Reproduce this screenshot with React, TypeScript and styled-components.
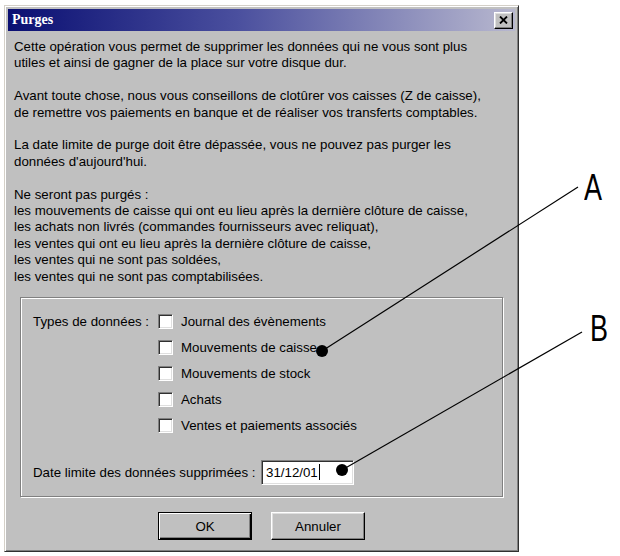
import React from 'react';
import styled, { createGlobalStyle } from 'styled-components';

const GlobalStyle = createGlobalStyle`
  html, body {
    margin: 0;
    padding: 0;
    background: #ffffff;
  }
  body {
    font-family: "Liberation Sans", Arial, sans-serif;
    color: #000;
  }
`;

// 화면 전체 (흰 바탕)
const Page = styled.div`
  position: relative;
  width: 620px;
  height: 556px;
  box-sizing: border-box;
  padding: 5px 0 0 4px;
  overflow: hidden;
  background: #ffffff;
`;

// 대화상자 창
const Window = styled.div`
  width: 515px;
  box-sizing: border-box;
  background: #c0c0c0;
  border: 1px solid;
  border-color: #d4d0c8 #303030 #303030 #d4d0c8;
  box-shadow: inset 1px 1px 0 #ffffff, inset -1px -1px 0 #808080;
  padding: 3px;
`;

const TitleBar = styled.div`
  height: 22px;
  display: flex;
  align-items: center;
  justify-content: space-between;
  padding: 0 2px 0 4px;
  background: linear-gradient(90deg, #0a0f72 0%, #4a4f9e 45%, #b8b8cf 100%);
`;

const Title = styled.span`
  font-family: "Liberation Serif", "Times New Roman", serif;
  font-weight: bold;
  font-size: 14px;
  color: #ffffff;
`;

const CloseButton = styled.div`
  width: 19px;
  height: 17px;
  box-sizing: border-box;
  display: flex;
  align-items: center;
  justify-content: center;
  background: #c0c0c0;
  border: 1px solid;
  border-color: #ffffff #000000 #000000 #ffffff;
  box-shadow: inset -1px -1px 0 #808080, inset 1px 1px 0 #dfdfdf;
`;

const Body = styled.div`
  padding: 8px 0 8px 0;
`;

const Description = styled.div`
  padding-left: 6px;
  font-size: 13.3px;
  line-height: 16.4px;
  white-space: nowrap;
`;

const Para = styled.p`
  margin: 0 0 16.4px 0;
  &:last-child {
    margin-bottom: 0;
  }
`;

// 그룹 박스 (홈 파인 테두리)
const GroupBox = styled.div`
  margin: 12px 12px 0 12px;
  padding: 11px 12px 11.5px 12px;
  border: 1px solid #808080;
  box-shadow: inset 1px 1px 0 #ffffff, 1px 1px 0 #ffffff;
  font-size: 13.3px;
`;

const TypesGrid = styled.div`
  display: grid;
  grid-template-columns: 125px 1fr;
`;

const FieldLabel = styled.div<{ $width?: number }>`
  height: 25.8px;
  display: flex;
  align-items: center;
  white-space: nowrap;
  ${(p) => (p.$width ? `width: ${p.$width}px; flex: none;` : '')}
`;

const CheckList = styled.div`
  display: flex;
  flex-direction: column;
`;

const CheckRow = styled.label`
  height: 25.8px;
  display: flex;
  align-items: center;
  gap: 8px;
  white-space: nowrap;
`;

const CheckBox = styled.span`
  width: 15px;
  height: 15px;
  box-sizing: border-box;
  flex: none;
  background: #ffffff;
  border: 1px solid;
  border-color: #808080 #ffffff #ffffff #808080;
  box-shadow: inset 1px 1px 0 #303030, inset -1px -1px 0 #dfdfdf;
`;

const DateRow = styled.div`
  margin-top: 21.5px;
  height: 25px;
  display: flex;
  align-items: center;
`;

const DateField = styled.div`
  width: 93px;
  height: 25px;
  box-sizing: border-box;
  display: flex;
  align-items: center;
  padding-left: 4px;
  background: #ffffff;
  border: 1px solid;
  border-color: #808080 #ffffff #ffffff #808080;
  box-shadow: inset 1px 1px 0 #303030, inset -1px -1px 0 #dfdfdf;
`;

const Caret = styled.span`
  width: 1px;
  height: 16px;
  margin-left: 1px;
  background: #000;
`;

const ButtonRow = styled.div`
  margin-top: 15px;
  display: flex;
  justify-content: center;
  gap: 19px;
`;

const Button = styled.button<{ $default?: boolean }>`
  width: 94px;
  height: 28px;
  box-sizing: border-box;
  padding: 0;
  font-family: "Liberation Sans", Arial, sans-serif;
  font-size: 13.3px;
  color: #000;
  background: #c0c0c0;
  border: 1px solid;
  border-color: ${(p) => (p.$default ? '#000' : '#ffffff #000000 #000000 #ffffff')};
  box-shadow: ${(p) =>
    p.$default
      ? 'inset 1px 1px 0 #ffffff, inset -1px -1px 0 #000000, inset -2px -2px 0 #808080'
      : 'inset -1px -1px 0 #808080, inset 1px 1px 0 #dfdfdf'};
`;

// 주석 (A, B 지시선)
const Callouts = styled.svg`
  position: absolute;
  left: 0;
  top: 0;
  pointer-events: none;
`;

const CalloutLetter = styled.span<{ $x: number; $y: number }>`
  position: absolute;
  left: ${(p) => p.$x}px;
  top: ${(p) => p.$y}px;
  font-family: "Liberation Sans", Arial, sans-serif;
  font-size: 36px;
  line-height: 36px;
  color: #000;
  transform: scaleX(0.75);
  transform-origin: left top;
`;

const types = [
  'Journal des évènements',
  'Mouvements de caisse',
  'Mouvements de stock',
  'Achats',
  'Ventes et paiements associés',
];

export default function App(): JSX.Element {
  return (
    <Page>
      <GlobalStyle />
      <Window>
        <TitleBar>
          <Title>Purges</Title>
          <CloseButton>
            <svg width="9" height="8" viewBox="0 0 9 8">
              <path d="M1 0.5 L8 7.5 M8 0.5 L1 7.5" stroke="#000" strokeWidth="1.8" />
            </svg>
          </CloseButton>
        </TitleBar>
        <Body>
          <Description>
            <Para>
              Cette opération vous permet de supprimer les données qui ne vous sont plus
              <br />
              utiles et ainsi de gagner de la place sur votre disque dur.
            </Para>
            <Para>
              Avant toute chose, nous vous conseillons de clotûrer vos caisses (Z de caisse),
              <br />
              de remettre vos paiements en banque et de réaliser vos transferts comptables.
            </Para>
            <Para>
              La date limite de purge doit être dépassée, vous ne pouvez pas purger les
              <br />
              données d'aujourd'hui.
            </Para>
            <Para>
              Ne seront pas purgés :
              <br />
              les mouvements de caisse qui ont eu lieu après la dernière clôture de caisse,
              <br />
              les achats non livrés (commandes fournisseurs avec reliquat),
              <br />
              les ventes qui ont eu lieu après la dernière clôture de caisse,
              <br />
              les ventes qui ne sont pas soldées,
              <br />
              les ventes qui ne sont pas comptabilisées.
            </Para>
          </Description>

          <GroupBox>
            <TypesGrid>
              <FieldLabel>Types de données :</FieldLabel>
              <CheckList>
                {types.map((t) => (
                  <CheckRow key={t}>
                    <CheckBox />
                    {t}
                  </CheckRow>
                ))}
              </CheckList>
            </TypesGrid>
            <DateRow>
              <FieldLabel $width={228}>Date limite des données supprimées :</FieldLabel>
              <DateField>
                31/12/01
                <Caret />
              </DateField>
            </DateRow>
          </GroupBox>

          <ButtonRow>
            <Button $default>OK</Button>
            <Button>Annuler</Button>
          </ButtonRow>
        </Body>
      </Window>

      <Callouts width="620" height="556" viewBox="0 0 620 556">
        <line x1="322" y1="351" x2="578" y2="187" stroke="#000" strokeWidth="1.2" />
        <line x1="342" y1="470" x2="582" y2="332" stroke="#000" strokeWidth="1.2" />
        <circle cx="322" cy="351" r="6" fill="#000" />
        <circle cx="342" cy="470" r="6" fill="#000" />
      </Callouts>
      <CalloutLetter $x={584} $y={170}>A</CalloutLetter>
      <CalloutLetter $x={590} $y={311}>B</CalloutLetter>
    </Page>
  );
}
